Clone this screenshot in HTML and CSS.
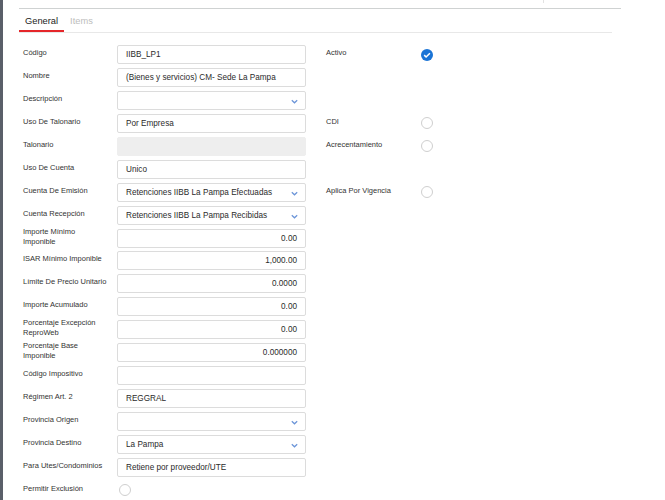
FILE: index.html
```html
<!DOCTYPE html>
<html lang="es">
<head>
<meta charset="utf-8">
<title>IIBB_LP1</title>
<link rel="stylesheet" href="styles.css">
</head>
<body>
<div class="page">
  <div class="topbar"><span class="tick"></span></div>
  <div class="topline"></div>
  <div class="tabs">
    <div class="tab active">General</div>
    <div class="tab">Items</div>
  </div>
  <div class="form">
    <div class="lbl r0">Código</div><div class="inp r0">IIBB_LP1</div>
    <div class="lbl r1">Nombre</div><div class="inp r1">(Bienes y servicios) CM- Sede La Pampa</div>
    <div class="lbl r2">Descripción</div><div class="inp sel r2"><span></span><svg class="chev" width="7" height="5" viewBox="0 0 7 5"><path d="M0.8 1.2 L3.5 3.8 L6.2 1.2" fill="none" stroke="#6b95d8" stroke-width="1.2"/></svg></div>
    <div class="lbl r3">Uso De Talonario</div><div class="inp r3">Por Empresa</div>
    <div class="lbl r4">Talonario</div><div class="inp dis r4"></div>
    <div class="lbl r5">Uso De Cuenta</div><div class="inp r5">Unico</div>
    <div class="lbl r6">Cuenta De Emisión</div><div class="inp sel r6"><span>Retenciones IIBB La Pampa Efectuadas</span><svg class="chev" width="7" height="5" viewBox="0 0 7 5"><path d="M0.8 1.2 L3.5 3.8 L6.2 1.2" fill="none" stroke="#6b95d8" stroke-width="1.2"/></svg></div>
    <div class="lbl r7">Cuenta Recepción</div><div class="inp sel r7"><span>Retenciones IIBB La Pampa Recibidas</span><svg class="chev" width="7" height="5" viewBox="0 0 7 5"><path d="M0.8 1.2 L3.5 3.8 L6.2 1.2" fill="none" stroke="#6b95d8" stroke-width="1.2"/></svg></div>
    <div class="lbl r8">Importe Mínimo Imponible</div><div class="inp num r8">0.00</div>
    <div class="lbl r9">ISAR Mínimo Imponible</div><div class="inp num r9">1,000.00</div>
    <div class="lbl r10">Límite De Precio Unitario</div><div class="inp num r10">0.0000</div>
    <div class="lbl r11">Importe Acumulado</div><div class="inp num r11">0.00</div>
    <div class="lbl r12">Porcentaje Excepción ReproWeb</div><div class="inp num r12">0.00</div>
    <div class="lbl r13">Porcentaje Base Imponible</div><div class="inp num r13">0.000000</div>
    <div class="lbl r14">Código Impositivo</div><div class="inp r14"></div>
    <div class="lbl r15">Régimen Art. 2</div><div class="inp r15">REGGRAL</div>
    <div class="lbl r16">Provincia Origen</div><div class="inp sel r16"><span></span><svg class="chev" width="7" height="5" viewBox="0 0 7 5"><path d="M0.8 1.2 L3.5 3.8 L6.2 1.2" fill="none" stroke="#6b95d8" stroke-width="1.2"/></svg></div>
    <div class="lbl r17">Provincia Destino</div><div class="inp sel r17"><span>La Pampa</span><svg class="chev" width="7" height="5" viewBox="0 0 7 5"><path d="M0.8 1.2 L3.5 3.8 L6.2 1.2" fill="none" stroke="#6b95d8" stroke-width="1.2"/></svg></div>
    <div class="lbl r18">Para Utes/Condominios</div><div class="inp r18">Retiene por proveedor/UTE</div>
    <div class="lbl r19">Permitir Exclusión</div><div class="chkcell left r19"><span class="radio"></span></div>

    <div class="rlbl r0">Activo</div>
    <div class="chkcell right r0"><svg width="12" height="12" viewBox="0 0 12 12"><circle cx="6" cy="6" r="6" fill="#1a74d6"/><path d="M3.2 6.1 L5.1 8 L8.9 4.2" fill="none" stroke="#fff" stroke-width="1.5"/></svg></div>
    <div class="rlbl r3">CDI</div><div class="chkcell right r3"><span class="radio"></span></div>
    <div class="rlbl r4">Acrecentamiento</div><div class="chkcell right r4"><span class="radio"></span></div>
    <div class="rlbl r6">Aplica Por Vigencia</div><div class="chkcell right r6"><span class="radio"></span></div>
  </div>
</div>
</body>
</html>
```

FILE: styles.css
```css
html, body {
  margin: 0;
  padding: 0;
  background: #fff;
}
body {
  font-family: "Liberation Sans", Arial, sans-serif;
  color: #333;
}
.page {
  border-left: 3px solid #5a5f69;
  height: 500px;
  box-sizing: border-box;
  padding-left: 16px;
  overflow: hidden;
}
.topbar {
  height: 8px;
  position: relative;
}
.tick {
  display: block;
  margin-left: 524px;
  width: 0;
  height: 3px;
  border-left: 1px solid #e2e2e2;
}
.topline {
  width: 602px;
  border-top: 1px solid #cfd2d2;
}
.tabs {
  width: 593px;
  height: 23px;
  border-bottom: 1px solid #e8e8e8;
  display: flex;
  align-items: stretch;
}
.tab {
  font-size: 9.3px;
  padding: 0 6px;
  line-height: 24px;
  color: #bdbdbd;
  margin-right: 0;
}
.tab.active {
  color: #222;
  box-shadow: inset 0 -2px 0 #e5262a;
}
.form {
  margin-top: 12px;
  padding-left: 4px;
  display: grid;
  grid-template-columns: 94px 189px 20px 95px 12px;
  grid-auto-rows: 19px;
  row-gap: 3.95px;
}
.lbl, .rlbl {
  font-size: 7.5px;
  line-height: 10px;
  color: #333;
  display: flex;
  align-items: center;
  padding-bottom: 3px;
  box-sizing: border-box;
}
.lbl { grid-column: 1; padding-right: 8px; }
.rlbl { grid-column: 4; }
.inp {
  grid-column: 2;
  border: 1px solid #dcdcdc;
  border-radius: 2px;
  box-sizing: border-box;
  font-size: 8.2px;
  color: #2b2b2b;
  padding: 0 8px 0 8px;
  display: flex;
  align-items: center;
  white-space: nowrap;
}
.inp.num { justify-content: flex-end; }
.inp.dis { background: #eeeeee; border-color: #eeeeee; }
.inp.sel { justify-content: space-between; }
.chev { margin-top: 2px; margin-right: -1px; }
.chkcell {
  display: flex;
  align-items: center;
}
.chkcell.left { grid-column: 2; padding-left: 2px; }
.chkcell.right { grid-column: 5; }
.radio {
  width: 12px;
  height: 12px;
  box-sizing: border-box;
  border: 1px solid #cfcfcf;
  border-radius: 50%;
  background: #fff;
}
.r0 { grid-row: 1; }
.r1 { grid-row: 2; }
.r2 { grid-row: 3; }
.r3 { grid-row: 4; }
.r4 { grid-row: 5; }
.r5 { grid-row: 6; }
.r6 { grid-row: 7; }
.r7 { grid-row: 8; }
.r8 { grid-row: 9; }
.r9 { grid-row: 10; }
.r10 { grid-row: 11; }
.r11 { grid-row: 12; }
.r12 { grid-row: 13; }
.r13 { grid-row: 14; }
.r14 { grid-row: 15; }
.r15 { grid-row: 16; }
.r16 { grid-row: 17; }
.r17 { grid-row: 18; }
.r18 { grid-row: 19; }
.r19 { grid-row: 20; }
```
